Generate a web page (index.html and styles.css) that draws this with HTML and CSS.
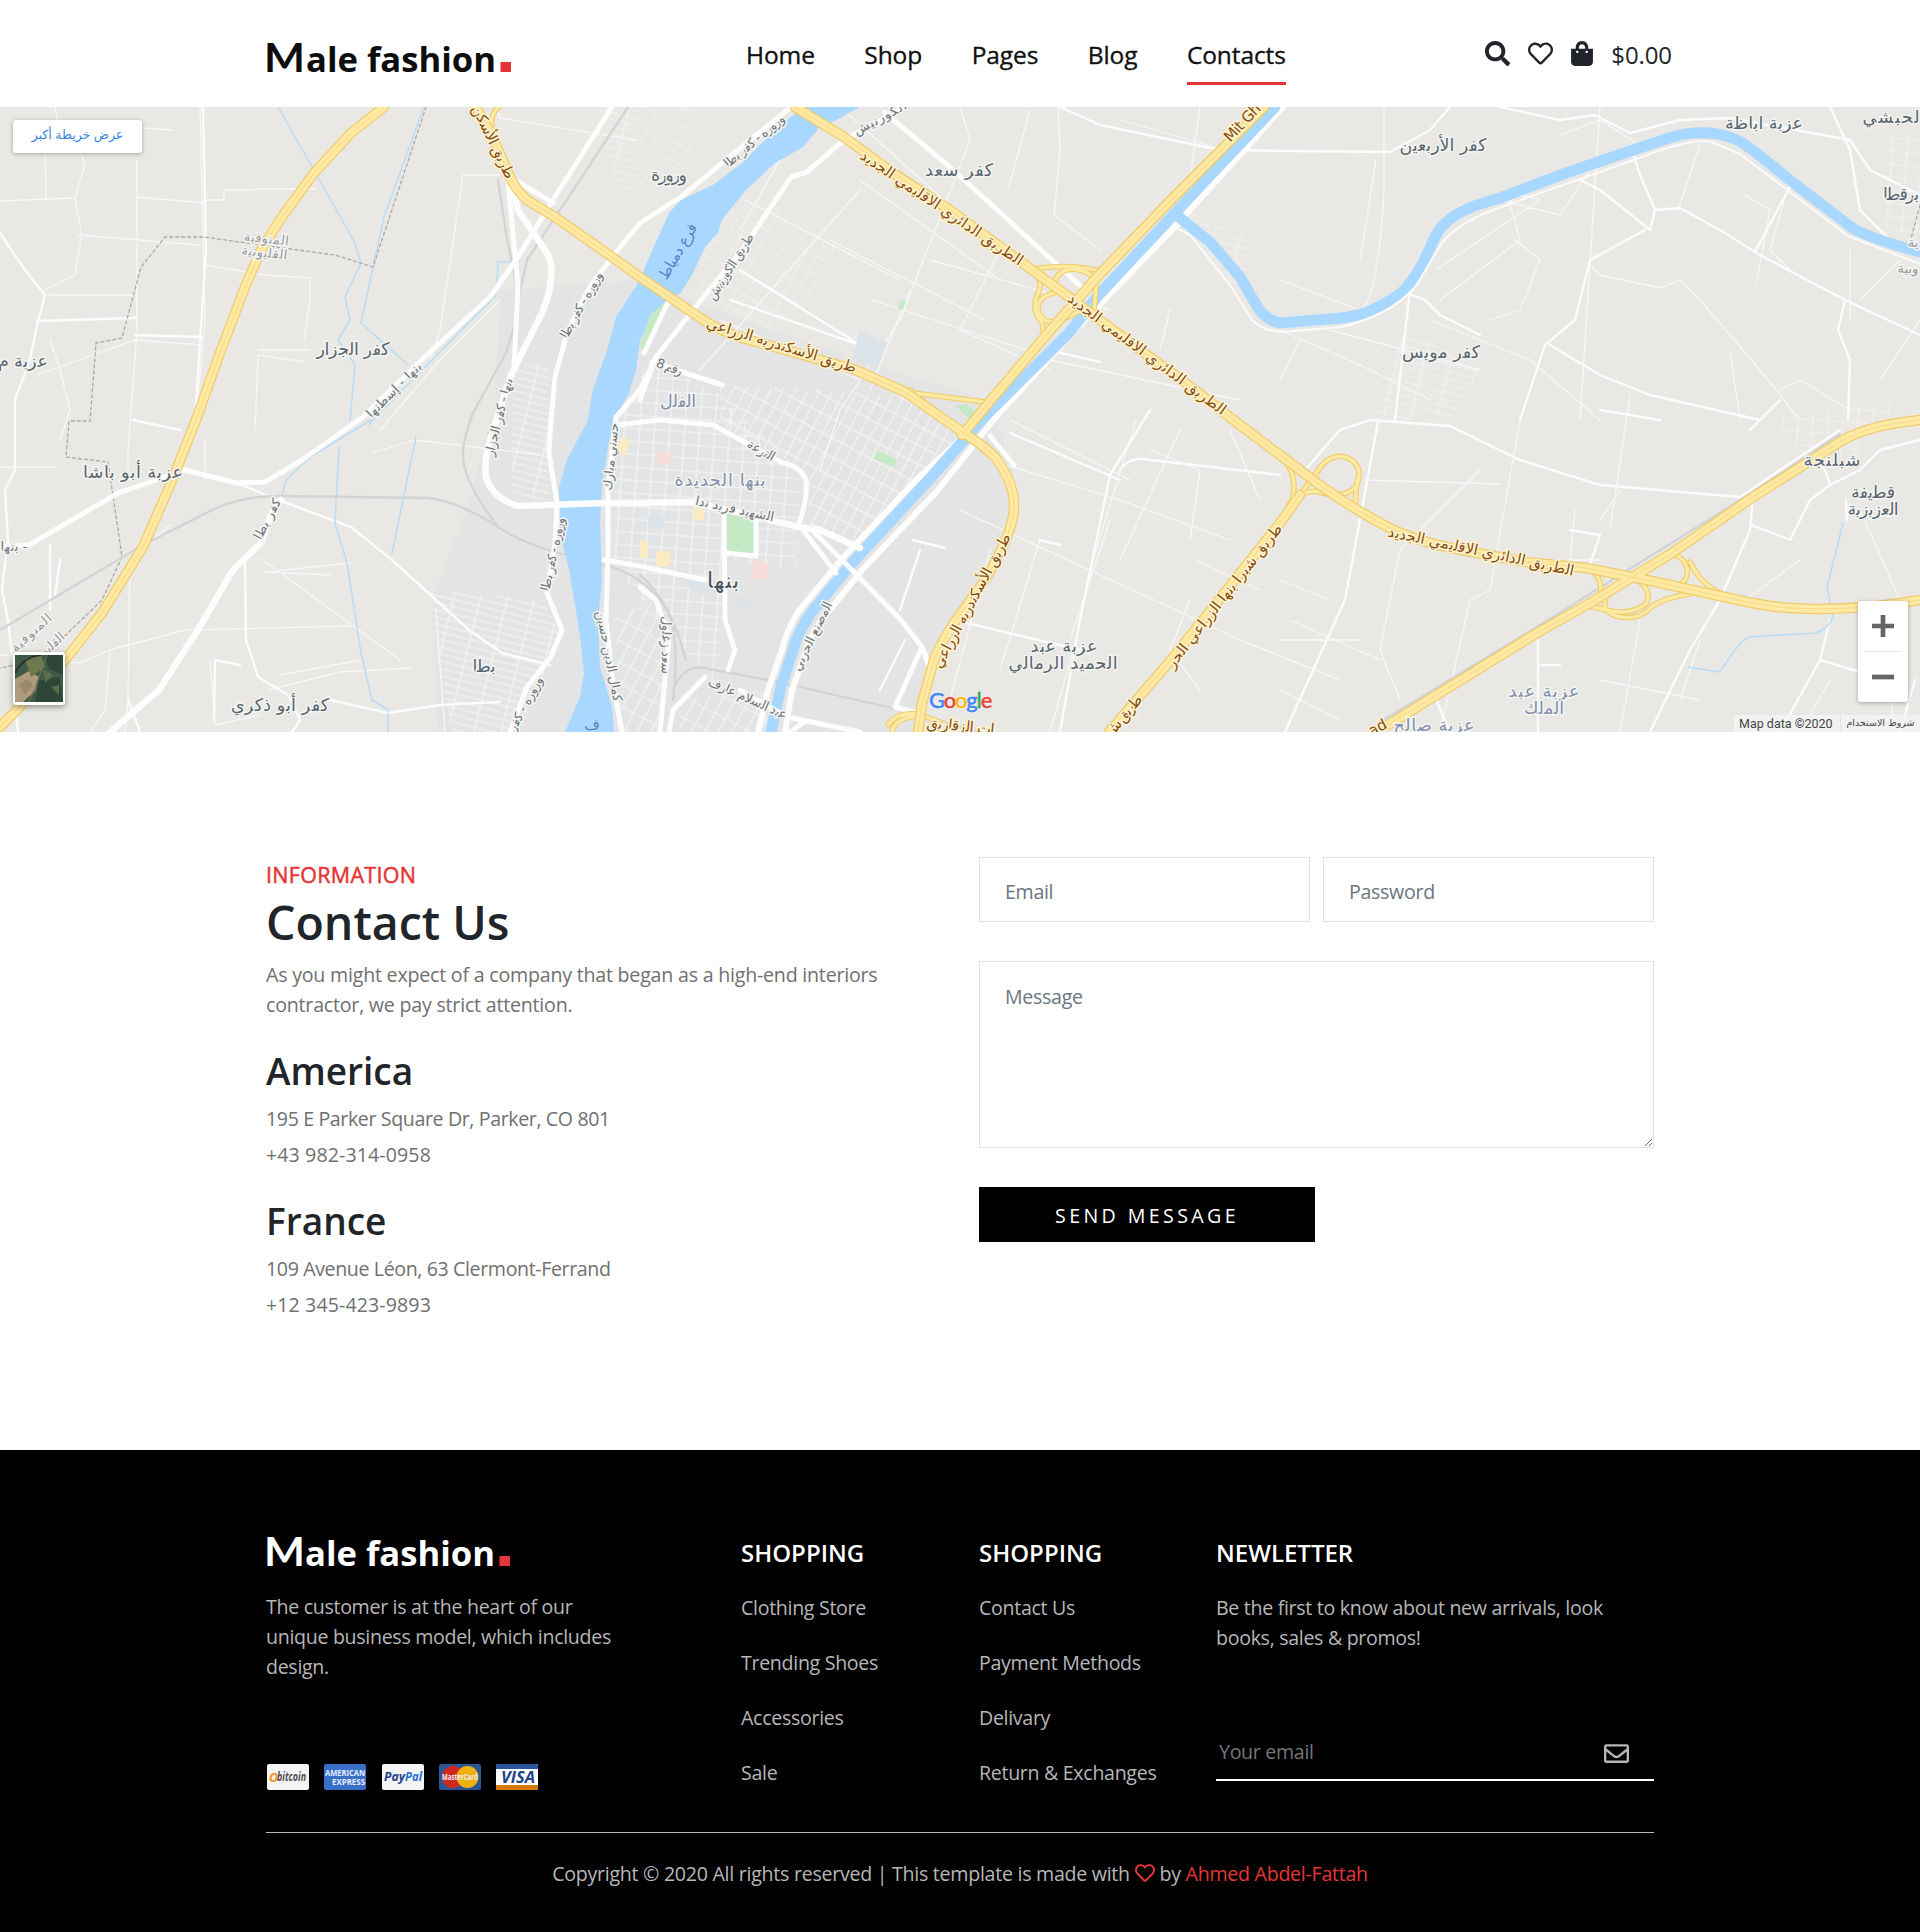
FILE: index.html
```html
<!DOCTYPE html>
<html lang="en">
<head>
<meta charset="utf-8">
<title>Male fashion - Contacts</title>
<link rel="stylesheet" href="styles.css">
</head>
<body>
<header class="header">
  <div class="container header-row">
    <a class="brand" href="#">
      <svg class="logo" width="247" height="40" viewBox="0 0 247 40">
        <text class="logo-m" x="-2" y="34" textLength="41" lengthAdjust="spacingAndGlyphs">M</text>
        <text class="logo-text" x="40" y="34" textLength="190" lengthAdjust="spacingAndGlyphs">ale fashion</text>
        <rect class="logo-dot" x="234.500" y="24" width="10.500" height="10"/>
      </svg>
    </a>
    <nav class="nav">
      <a href="#">Home</a>
      <a href="#">Shop</a>
      <a href="#">Pages</a>
      <a href="#">Blog</a>
      <a class="active" href="#">Contacts</a>
    </nav>
    <div class="tools">
      <svg width="25" height="25" viewBox="0 0 512 512"><path d="M505 442.700L405.300 343c-4.500-4.500-10.600-7-17-7H372c27.600-35.300 44-79.700 44-128C416 93.100 322.900 0 208 0S0 93.100 0 208s93.100 208 208 208c48.300 0 92.700-16.400 128-44v16.300c0 6.400 2.500 12.500 7 17l99.700 99.700c9.400 9.400 24.600 9.400 33.900 0l28.300-28.300c9.400-9.400 9.400-24.600.1-34zM208 336c-70.700 0-128-57.200-128-128 0-70.700 57.200-128 128-128 70.700 0 128 57.200 128 128 0 70.700-57.200 128-128 128z"/></svg>
      <svg width="25" height="25" viewBox="0 0 512 512"><path d="M458.400 64.300C400.600 15.700 311.300 23 256 79.300 200.700 23 111.400 15.600 53.600 64.300-21.600 127.600-10.600 230.800 43 285.500l175.400 178.700c10 10.200 23.400 15.900 37.600 15.900 14.300 0 27.600-5.600 37.600-15.800L469 285.600c53.500-54.700 64.700-157.900-10.600-221.300zm-23.600 187.500L259.400 430.500c-2.400 2.400-4.400 2.400-6.800 0L77.200 251.800c-36.500-37.200-43.900-107.600 7.300-150.700 38.900-32.700 98.900-27.800 136.500 10.500l35 35.700 35-35.700c37.800-38.500 97.800-43.200 136.500-10.600 51.100 43.100 43.500 113.900 7.300 150.800z"/></svg>
      <svg width="22" height="25" viewBox="0 0 448 512"><path d="M352 160v-32C352 57.420 294.579 0 224 0 153.420 0 96 57.420 96 128v32H0v272c0 44.183 35.817 80 80 80h288c44.183 0 80-35.817 80-80V160h-96zm-192-32c0-35.290 28.710-64 64-64s64 28.710 64 64v32H160v-32zm160 120c-13.255 0-24-10.745-24-24s10.745-24 24-24 24 10.745 24 24-10.745 24-24 24zm-192 0c-13.255 0-24-10.745-24-24s10.745-24 24-24 24 10.745 24 24-10.745 24-24 24z"/></svg>
      <span class="total">$0.00</span>
    </div>
  </div>
</header>

<section class="map">
  <svg class="map-canvas" width="1920" height="625" viewBox="0 107 1920 625">
    <defs>
      <pattern id="grid-a" width="17" height="11" patternUnits="userSpaceOnUse" patternTransform="rotate(-62)"><path class="street" d="M0 5.500H17M4 0V11"/></pattern>
      <pattern id="grid-b" width="15" height="13" patternUnits="userSpaceOnUse" patternTransform="rotate(4)"><path class="street" d="M0 6H15M8 0V13"/></pattern>
      <pattern id="grid-c" width="26" height="7" patternUnits="userSpaceOnUse" patternTransform="rotate(14)"><path class="street" d="M0 3H26M13 0V7"/></pattern>
      <pattern id="grid-d" width="12" height="19" patternUnits="userSpaceOnUse" patternTransform="rotate(28)"><path class="street" d="M0 9H12M6 0V19"/></pattern>
      <g id="highways">
        <path d="M384 107L351 133L314 173L282 217L261 250L245 287L220 353L196 420L171 483L143 547L102 613L65 660L0 727"/>
        <path d="M476 107L494 140L510 177Q516 190 527 200L555 217L612 257L640 277L693 313Q716 330 742 338L803 355L856 370L905 392L942 418L967 435Q984 446 995 457Q1015 484 1014 507Q1014 530 987 577L954 623Q938 648 934 660L922 703L918 732"/>
        <path d="M795 107L844 137L893 173L950 210L1028 267L1069 297L1113 330L1191 387L1232 419L1280 455L1317 483Q1360 514 1398 532Q1430 544 1451 548L1525 562L1586 568L1647 580L1729 598Q1762 606 1790 608Q1850 612 1920 600"/>
        <path d="M1264 107L1171 200L1097 277L1048 333L991 400L962 435"/>
        <path d="M1388 725L1537 633L1590 603L1672 553L1753 497L1843 440Q1870 425 1920 420"/>
        <path d="M1109 732L1171 660L1280 523L1300 495"/>
      </g>
      <g id="ramps">
        <path d="M499 107Q490 114 492 126"/>
        <path d="M1028 270Q1068 262 1104 272M1054 288Q1054 271 1072 269Q1094 270 1096 287L1094 312M1036 272Q1044 284 1036 298Q1032 312 1042 322L1044 338M1058 292Q1036 296 1038 310Q1044 330 1070 316L1086 308"/>
        <path d="M905 392L985 402L991 398M910 390L952 426"/>
        <path d="M1300 495L1322 465Q1332 454 1346 457Q1364 464 1357 485Q1346 500 1320 492Q1306 488 1288 504M1286 462Q1298 480 1292 500M1357 480L1355 506L1370 516"/>
        <path d="M1594 573Q1603 580 1600 596M1606 598Q1600 612 1620 617Q1640 620 1650 608Q1662 598 1690 594M1640 582Q1652 592 1646 604Q1630 616 1606 610L1590 606M1672 553Q1692 562 1686 578Q1682 586 1672 586M1690 562Q1704 590 1729 596"/>
        <path d="M888 725Q896 712 918 714L940 722M892 732Q894 718 918 716"/>
      </g>
      <g id="canal"><path d="M1275 107L1187 200L1097 297L1069 333L983 418L926 483L852 563L811 613Q798 632 793 650L781 687L771 732"/></g>
    </defs>
    <rect class="land" y="107" width="1920" height="625"/>
    <path class="urban" d="M500 290L640 280L742 320L905 375L990 400L1012 470L1010 530L936 650L914 732H438L432 600L470 500L495 400Z"/>
    <path class="field-tint" d="M562 732L580 640L560 500L600 400L640 360L664 420L650 732Z"/>

    <!-- dense blocks of town streets -->
    <path fill="url(#grid-a)" d="M720 385L900 395L965 430L860 545L810 525L806 470L720 425Z"/>
    <path fill="url(#grid-b)" d="M616 425L650 360L720 395L800 470L795 570L725 560L720 690L640 600L612 560Z"/>
    <path fill="url(#grid-c)" d="M430 590L545 600L560 635L520 732H452L436 650ZM512 365H548L550 500L512 496Z"/>
    <path fill="url(#grid-d)" d="M614 620L650 600L664 640L660 732H624ZM676 700L770 690L765 732H680Z"/>
    <path fill="url(#grid-a)" opacity=".5" d="M700 230L760 190L850 260L770 330L700 300ZM640 107H700L690 170L640 200Z"/>
    <path fill="url(#grid-c)" opacity=".7" d="M1405 330L1440 345L1415 420H1372ZM1440 350L1480 370L1450 420L1424 410ZM1188 210L1250 240L1240 300L1205 260ZM600 110L640 110L636 190L615 190Z"/>
    <path fill="url(#grid-b)" opacity=".7" d="M1886 130L1920 135V250L1885 225ZM1770 420L1900 400L1850 460L1800 450Z"/>

    <!-- minor roads -->
    <g class="lane">
      <path d="M137 220H136M55 107L58 122L172 130M45 140L46 200M200 107L205 320L196 420M137 160V330L128 450V470M0 201L75 198L85 165L76 140M75 198L82 235L75 275L45 290M78 235L200 245M205 200H224V190H253L256 189H315M135 197L205 203M205 265L265 275L310 278V300L304 340M37 375L135 340M50 340L60 370L70 410L60 440M135 340L203 345M0 467H55M205 480V440M258 350H310M305 362L258 355L255 430M48 295H135M463 175L500 175M463 175L440 330L430 360M500 300L440 360L380 430M372 453L415 440L540 455M0 655L80 663L110 650L185 630L350 626M110 650L105 710L90 732M170 525L130 560L128 700L125 732M210 660L215 725L260 715M350 563L265 572L330 575M268 690L340 672L410 668M260 558L400 660M361 660L280 675M495 107L500 118L636 140M436 610L445 732"/>
      <path d="M840 107L1000 250M780 160L740 230M745 200L900 280M960 107L970 140L900 320L840 410L820 470M910 290L870 390M860 190L700 370M1000 250L960 330L1050 370M830 240L985 320M860 180L1000 280M720 320L860 380M1058 107L1060 150L1054 215L1100 250M930 260L1110 310M872 300L1026 350M1050 360L1240 400M1030 110L1008 190M1120 120L1225 150M1200 107L1190 180M990 460L1120 500L1230 540M1136 420L1090 570L1076 640L1050 732M960 510L1240 640M990 550L950 700M1040 540L1000 670M1110 520L1070 640M1180 430L1120 560M1190 600L1170 650L1200 690M1240 640L1340 680M1160 350L1170 310M1150 450L1200 470L1190 540M1230 430L1260 500M1010 420L1130 480M1195 560L1260 590M1290 620L1380 660"/>
      <path d="M1280 280L1360 310Q1378 300 1384 190V107M1436 270L1540 200Q1512 190 1510 205L1520 240L1440 300M1280 330L1360 365L1430 400M1376 160L1360 260M1280 380L1300 340M1330 330L1480 370M1515 240L1540 260L1520 310L1490 320M1590 265L1600 275L1660 288L1680 280L1700 300L1760 370L1800 420M1700 145L1678 210M1745 195L1770 210L1756 285M1790 180L1770 250L1790 270M1640 145L1600 120L1560 135M1500 200L1560 215L1590 170M1860 300L1900 260M1850 410L1800 380L1780 390M1920 320L1880 380M1630 395L1610 530M1730 350L1740 420M1430 320L1530 360L1600 420M1365 480L1500 484M1520 420L1490 590L1470 600L1440 732M1480 470L1400 550L1380 650L1400 700M1600 107L1580 420M1280 580L1330 600M1280 640L1360 640M1575 510L1570 560L1600 560M1620 490L1600 520M1640 620L1620 732M1700 640L1680 700M1745 600L1800 560M1280 690L1340 720M1600 680L1700 700M1860 510L1900 600L1890 732M1830 680L1800 732M1850 250V320"/>
    </g>
    <g class="road-sm">
      <path d="M0 233L25 270L45 295L37 325L30 360L15 400V470L5 490L8 540L2 590L8 620L12 655L18 732"/>
      <path d="M37 321L135 318M135 335L202 337M203 107L206 250L195 420M133 420L180 430M50 545V610M55 595L60 560M237 483L278 500L351 527L392 560L469 630L502 653L550 665M245 560L246 640L258 677L288 695L300 720L292 732M214 720L215 660L240 665M388 713L440 705L500 702M330 700L388 713M140 732L128 700"/>
      <path d="M1060 107L1100 125L1220 150L1290 151L1390 152L1430 130L1450 107M1500 107L1560 120L1595 115L1630 133L1680 120L1730 118L1850 140L1870 170L1920 195M1580 180L1600 190L1650 230L1655 210L1640 175L1632 150M1655 210L1680 208L1720 230L1760 255L1845 300L1920 335M1645 230L1590 260L1575 320L1545 345L1520 420M1845 300L1838 330L1850 360L1848 420M1550 345L1600 375L1650 395L1760 420M1790 187L1755 252M1407 293L1425 300L1440 315L1480 335M1410 290L1395 420M1830 107L1850 150L1860 210L1890 240M1780 400L1750 430M1600 410L1660 420M1305 470L1340 430L1370 420L1450 426L1520 460L1600 485L1740 497L1780 470L1840 430M1378 422L1345 600L1285 732M1753 497L1750 530L1720 600L1690 650L1650 732M1752 525L1790 540L1810 500L1830 485L1860 470L1880 450L1920 440M1830 485L1825 470L1810 450M1847 520L1846 500M1830 620L1820 660L1780 732M1820 660L1870 675M1900 732L1915 680M1538 640V732M1437 702L1450 732M1540 665L1560 665M1570 530L1600 535L1590 565"/>
      <path d="M1048 350L1100 362M1150 410L1110 475L1080 620L1060 732M1120 470Q1130 455 1150 460L1280 475M1010 433L1120 480M954 620L1080 650M1040 540L1060 545M913 540L945 548M920 550L900 610M880 690L905 640M740 270L860 345L730 300"/>
    </g>
    <g class="water-sm">
      <path d="M278 107L310 163L355 243L361 263L345 297L350 320L338 340L355 365L350 420M424 107L384 217L361 323L408 365M416 437L392 553M371 420L310 457L286 480L281 500M339 447L335 523L347 563L361 653L372 700L388 710V732M518 262L498 262L496 295L432 360L368 425"/>
      <path d="M1843 523L1827 587L1833 617Q1828 630 1815 633L1749 637Q1740 642 1733 653L1719 672L1688 667"/>
    </g>
    <path class="boundary" d="M426 107L373 267L335 255L261 245L204 237L165 237L141 267L122 338L96 343L90 421H69L66 457L108 462L122 557L102 600L40 660L0 668M1920 205L1908 250"/>
    <g class="rail">
      <path d="M498 180L506 233L518 293Q518 320 506 353L473 413Q463 440 463 453Q462 480 498 527Q520 542 555 552L612 567Q650 580 668 612Q680 640 673 700M628 107L527 260L518 300M0 630L143 545L216 508Q244 496 278 496L429 498Q460 502 498 527M673 690Q684 664 705 668L783 683L922 715L980 732M640 575Q670 600 686 660M1380 722L1532 630L1750 494L1840 434"/>
    </g>

    <!-- river and canals -->
    <path class="water" d="M803 107L775 130L742 163L713 185L681 200L669 213L660 233L648 260L640 280L616 317L608 347L592 393L588 420L567 460L559 487L561 537L569 570L576 610L580 637L584 673L580 697L565 732H614L612 707L600 667L598 620L602 580L600 520L602 487L608 447L614 420L628 395L636 370L640 340L664 303L681 293L693 273L705 247L718 233L722 220L746 190L775 163L803 147L820 127L836 120L860 107Z"/>
    <path class="canal-road" d="M1283 107L1171 231L1083 322L995 418L938 490L862 570L820 622Q808 640 804 656L792 690L785 732M962 438L916 480L841 560L798 612Q786 632 782 650L768 690L758 732"/>
    <use class="canal" href="#canal"/>
    <path class="canal" d="M1179 217L1211 243L1240 277L1258 308Q1266 320 1280 323L1341 318Q1362 316 1378 307Q1400 296 1407 287Q1416 276 1423 263L1435 237Q1442 223 1456 215Q1470 206 1500 198L1566 173L1639 148L1672 137Q1690 132 1709 133Q1726 134 1741 142Q1756 152 1786 177L1851 227Q1868 238 1920 252"/>
    <path class="road-thin" d="M1172 226L1190 235L1230 285L1252 320Q1264 332 1284 332L1341 327Q1390 316 1416 286L1440 246Q1456 222 1504 206L1642 157Q1690 138 1712 142L1740 154L1848 236L1920 264"/>
    <path class="park" d="M726 513L756 517V555L726 552ZM664 303L650 315L640 345L644 353L668 303ZM878 451L897 460L894 467L874 459ZM956 406L966 404L979 414L970 419ZM900 301L906 300L903 310L898 309Z"/>
    <path class="clinic" d="M754 558L769 565L767 580L750 578ZM658 451L671 455L669 466L656 463Z"/>
    <path class="campus" d="M676 570L720 582L714 598L688 588ZM730 598H755V606H730ZM860 330L886 342L878 368L852 360ZM648 515H664V528H648Z"/>
    <path class="shops" d="M640 541H648V558H640ZM656 551H670V566H656ZM622 437L630 440L626 456L616 452ZM694 508H704V520H694Z"/>

    <!-- main roads -->
    <g class="road">
      <path d="M791 107L722 163L681 197L640 223L612 257L588 290L567 333L555 377L551 420L549 453L557 503L555 543L547 593L562 630L551 657L527 687L510 732"/>
      <path d="M612 107L551 203L518 257L490 297L429 353L363 417L302 460L265 482L237 483L184 470M29 545L118 493L171 475L184 470M0 547L29 545"/>
      <path class="wide" d="M281 500L273 510L261 543L233 570L196 633L159 690L110 732"/>
      <path class="wide" d="M510 180L518 210L543 247Q554 262 551 277Q550 300 535 327L510 377L490 440Q484 460 486 477Q492 498 518 506L604 503H640L693 502L799 527L820 530L860 548"/>
      <path d="M508 180L518 287L514 367M510 177L553 203M656 357L640 390L616 417L608 487V553L606 620L612 677L622 732"/>
      <path d="M905 107L844 140L807 172L791 177L742 250L693 310L656 357L640 400M669 300L644 353"/>
      <path d="M885 113L950 167L1085 290M652 362L722 385M616 425L660 420L713 425L783 463Q800 466 806 480Q808 500 799 523M803 530L836 573M810 528L852 570L901 620L922 647Q930 664 930 680M922 647L895 707L918 713M990 436L1014 465"/>
      <path d="M604 560L640 566L705 580M724 512L725 620L735 650L728 670M669 732L673 710L705 677M660 732L669 637L656 600L640 587M740 690L787 717L860 732M790 732L804 722M726 553L756 556V516"/>
    </g>
    <use class="hwy-case" href="#ramps"/><use class="ramp" href="#ramps"/>
    <use class="hwy-case wide" href="#highways"/><use class="hwy" href="#highways"/><use class="hwy-mid" href="#highways"/>

    <!-- place names -->
    <g class="label place">
      <text x="353" y="355" textLength="73">كفر الجزار</text>
      <text x="23" y="367" textLength="50">عزبة م</text>
      <text x="133" y="478" textLength="100">عزبة أبو باشا</text>
      <text x="280" y="711" textLength="98">كفر أبو ذكري</text>
      <text x="484" y="672" textLength="23">بطا</text>
      <text x="669" y="181" textLength="36">ورورة</text>
      <text x="959" y="176" textLength="68">كفر سعد</text>
      <text x="1443" y="151" textLength="87">كفر الأربعين</text>
      <text x="1441" y="358" textLength="78">كفر مويس</text>
      <text x="1764" y="129" textLength="78">عزبة اباظة</text>
      <text x="1891" y="123" textLength="57">لحبشي</text>
      <text x="1901" y="200" textLength="36">برقطا</text>
      <text x="1832" y="466" textLength="57">شبلنجة</text>
      <text x="1873" y="498" textLength="44">قطيفة</text>
      <text x="1873" y="515" textLength="51">العزيزية</text>
      <text x="1064" y="652" textLength="67">عزبة عبد</text>
      <text x="1063" y="669" textLength="109">الحميد الرمالي</text>
      <text class="city" x="723" y="588" textLength="32">بنها</text>
    </g>
    <g class="label hamlet">
      <text x="678" y="407" textLength="36">الفلل</text>
      <text x="720" y="486" textLength="91">بنها الجديدة</text>
      <text x="1544" y="697" textLength="71">عزبة عبد</text>
      <text x="1544" y="714" textLength="40">الملك</text>
      <text x="1434" y="731" textLength="81">عزبة صالح</text>
    </g>
    <g class="label region">
      <text transform="translate(266 243) rotate(6)" textLength="45">المنوفية</text>
      <text transform="translate(264 257) rotate(6)" textLength="46">القليوبية</text>
      <text transform="translate(34 636) rotate(-42)" textLength="50">المنوفية</text>
      <text transform="translate(50 652) rotate(-42)" textLength="42">القليوبية</text>
      <text x="1908" y="273">وبية</text>
      <text x="1913" y="247">ية</text>
    </g>
    <g class="label street-name">
      <text x="14" y="551" textLength="27">بنها -</text>
      <text transform="translate(271 521) rotate(-62)" textLength="44">كفر بطا</text>
      <text transform="translate(397 393) rotate(-45)" textLength="72">بنها - إسطنها</text>
      <text transform="translate(585 307) rotate(-61)" textLength="74">وروره - كفر بطا</text>
      <text transform="translate(503 418) rotate(-76)" textLength="80">بنها - كفر الجزار</text>
      <text transform="translate(757 144) rotate(-40)" textLength="75">وروره - كفر بطا</text>
      <text transform="translate(734 269) rotate(-58)" textLength="76">طريق الكورنيش</text>
      <text transform="translate(882 122) rotate(-28)" textLength="58">الكورنيش</text>
      <text transform="translate(668 371) rotate(20)" textLength="27">رقم 8</text>
      <text transform="translate(734 513) rotate(12)" textLength="80">الشهيد فريد ندا</text>
      <text transform="translate(759 454) rotate(29)" textLength="30">الترعة</text>
      <text transform="translate(615 457) rotate(-84)" textLength="68">حسني مبارك</text>
      <text transform="translate(557 555) rotate(-78)" textLength="75">وروره - كفر بطا</text>
      <text transform="translate(605 657) rotate(79)" textLength="92">كمال الدين حسين</text>
      <text transform="translate(662 645) rotate(91)" textLength="58">سعد زغلول</text>
      <text transform="translate(816 638) rotate(-64)" textLength="75">المصنع الحربي</text>
      <text transform="translate(746 702) rotate(24)" textLength="85">عبد السلام عارف</text>
      <text transform="translate(529 706) rotate(-62)" textLength="60">وروره - كفر</text>
    </g>
    <g class="label river-name">
      <text transform="translate(682 254) rotate(-60)" textLength="62">فرع دمياط</text>
      <text x="592" y="730">ف</text>
    </g>
    <g class="label highway-name">
      <text transform="translate(489 144) rotate(64)" textLength="80">طريق الأسكن</text>
      <text transform="translate(939 212) rotate(34)" textLength="193">الطريق الدائري الاقليمي الجديد</text>
      <text transform="translate(1144 358) rotate(36.500)" textLength="193">الطريق الدائري الاقليمي الجديد</text>
      <text transform="translate(1480 556) rotate(12)" textLength="190">الطريق الدائري الاقليمي الجديد</text>
      <text transform="translate(780 350) rotate(17)" textLength="156">طريق الأسكندريه الزراعي</text>
      <text transform="translate(976 603) rotate(-62)" textLength="150">طريق الأسكندريه الزراعي</text>
      <text transform="translate(1228 599) rotate(-52)" textLength="178">طريق شبرا بنها الزراعي الحر</text>
      <text transform="translate(1127 719) rotate(-50)" textLength="50">طريق ش</text>
      <text transform="translate(960 731) rotate(6)" textLength="68">ات الزقازيق</text>
      <text transform="translate(1246 126) rotate(-47)" textLength="46">Mit Gh</text>
      <text transform="translate(1380 732) rotate(-28)">ad</text>
    </g>
  </svg>
  <a class="larger-map" href="#" lang="ar">عرض خريطة أكبر</a>
  <div class="satellite">
    <svg width="48" height="47" viewBox="0 0 48 47">
      <rect width="48" height="47" fill="#3f5a45"/>
      <path fill="#b09a7c" d="M0 24L14 16L24 22L20 36L8 47H0Z"/>
      <path fill="#6e7a4e" d="M10 4L26 0L30 12L16 22Z"/>
      <path fill="#2c4637" d="M30 0H48V20L34 14ZM24 26L44 22L48 47H20Z"/>
      <path fill="#55714f" d="M28 14L38 20L30 28ZM36 32L44 30V40Z"/>
      <path fill="#9a8a68" d="M4 30L12 24L18 30L10 40Z"/>
      <path fill="none" stroke="#26332d" stroke-width="2" d="M0 18Q8 2 26 0"/>
      <path fill="none" stroke="#7c7460" d="M14 47L24 22L32 0"/>
    </svg>
  </div>
  <div class="google"><span class="g-blue">G</span><span class="g-red">o</span><span class="g-yellow">o</span><span class="g-blue">g</span><span class="g-green">l</span><span class="g-red">e</span></div>
  <div class="zoom">
    <button class="zoom-btn" aria-label="Zoom in"><svg width="22" height="22" viewBox="0 0 22 22"><path d="M0 11H22M11 0V22"/></svg></button>
    <button class="zoom-btn" aria-label="Zoom out"><svg width="22" height="22" viewBox="0 0 22 22"><path d="M0 11H22"/></svg></button>
  </div>
  <div class="credits"><span class="credit-data">Map data ©2020</span><span class="credit-terms" lang="ar">شروط الاستخدام</span></div>
</section>

<main class="container contact">
  <section class="info">
    <h6 class="eyebrow">INFORMATION</h6>
    <h1 class="title">Contact Us</h1>
    <p class="lead">As you might expect of a company that began as a high-end interiors<br>contractor, we pay strict attention.</p>
    <h2 class="place-title">America</h2>
    <p class="detail">195 E Parker Square Dr, Parker, CO 801</p>
    <p class="detail phone">+43 982-314-0958</p>
    <h2 class="place-title">France</h2>
    <p class="detail">109 Avenue Léon, 63 Clermont-Ferrand</p>
    <p class="detail phone">+12 345-423-9893</p>
  </section>
  <form class="form">
    <div class="form-row">
      <input class="field" type="email" placeholder="Email">
      <input class="field" type="password" placeholder="Password">
    </div>
    <textarea class="field message" placeholder="Message"></textarea>
    <button class="send" type="button">SEND MESSAGE</button>
  </form>
</main>

<footer class="footer">
  <div class="container">
    <div class="footer-grid">
      <div class="about">
        <svg class="logo light" width="247" height="40" viewBox="0 0 247 40">
          <text class="logo-m" x="-2" y="34" textLength="41" lengthAdjust="spacingAndGlyphs">M</text>
          <text class="logo-text" x="39" y="34" textLength="190" lengthAdjust="spacingAndGlyphs">ale fashion</text>
          <rect class="logo-dot" x="233.500" y="24" width="10.500" height="10"/>
        </svg>
        <p class="about-text">The customer is at the heart of our<br>unique business model, which includes<br>design.</p>
        <div class="cards">
          <svg width="42" height="26" viewBox="0 0 42 26"><rect width="42" height="26" rx="2" fill="#f4f4f4"/><text class="card-text" x="2" y="17.500" textLength="9" lengthAdjust="spacingAndGlyphs" fill="#f7931a">O</text><text class="card-text" x="10" y="17" textLength="29" lengthAdjust="spacingAndGlyphs" fill="#4d4d4d">bitcoin</text></svg>
          <svg width="42" height="26" viewBox="0 0 42 26"><rect width="42" height="26" rx="2" fill="#3a6fc9"/><text class="card-small" x="1" y="12" textLength="40" lengthAdjust="spacingAndGlyphs">AMERICAN</text><text class="card-small" x="8" y="21" textLength="33" lengthAdjust="spacingAndGlyphs">EXPRESS</text></svg>
          <svg width="42" height="26" viewBox="0 0 42 26"><rect width="42" height="26" rx="2" fill="#f4f4f4"/><text class="card-text" x="2" y="17" textLength="21" lengthAdjust="spacingAndGlyphs" fill="#1d3f8f">Pay</text><text class="card-text" x="23" y="17" textLength="17" lengthAdjust="spacingAndGlyphs" fill="#2a6fd6">Pal</text></svg>
          <svg width="42" height="26" viewBox="0 0 42 26"><rect width="42" height="26" rx="2" fill="#2b5597"/><circle cx="14" cy="13" r="11" fill="#d0281c"/><circle cx="28.500" cy="13" r="11" fill="#eeb111"/><text class="card-small" x="3" y="16" textLength="36" lengthAdjust="spacingAndGlyphs">MasterCard</text></svg>
          <svg width="42" height="26" viewBox="0 0 42 26"><rect width="42" height="26" rx="2" fill="#fff"/><path fill="#285499" d="M0 2Q0 0 2 0H40Q42 0 42 2V5H0Z"/><path fill="#d97b0c" d="M0 21H42V24Q42 26 40 26H2Q0 26 0 24Z"/><text class="card-text visa" x="5" y="18.500" textLength="34" lengthAdjust="spacingAndGlyphs" fill="#1d4488">VISA</text></svg>
        </div>
      </div>
      <div class="links">
        <h5 class="footer-title">SHOPPING</h5>
        <a href="#">Clothing Store</a><a href="#">Trending Shoes</a><a href="#">Accessories</a><a href="#">Sale</a>
      </div>
      <div class="links">
        <h5 class="footer-title">SHOPPING</h5>
        <a href="#">Contact Us</a><a href="#">Payment Methods</a><a href="#">Delivary</a><a href="#">Return &amp; Exchanges</a>
      </div>
      <div class="newsletter">
        <h5 class="footer-title">NEWLETTER</h5>
        <p class="news-text">Be the first to know about new arrivals, look<br>books, sales &amp; promos!</p>
        <div class="subscribe">
          <input class="subscribe-input" type="email" placeholder="Your email">
          <svg width="25" height="25" viewBox="0 0 512 512"><path d="M464 64H48C21.490 64 0 85.490 0 112v288c0 26.510 21.490 48 48 48h416c26.510 0 48-21.490 48-48V112c0-26.510-21.490-48-48-48zm0 48v40.805c-22.422 18.259-58.168 46.651-134.587 106.490-16.841 13.247-50.201 45.072-73.413 44.701-23.208.375-56.579-31.459-73.413-44.701C106.180 199.465 70.425 171.067 48 152.805V112h416zM48 400V214.398c22.914 18.251 55.409 43.862 104.938 82.646 21.857 17.205 60.134 55.186 103.062 54.955 42.717.231 80.509-37.199 103.053-54.947 49.528-38.783 82.032-64.401 104.947-82.653V400H48z"/></svg>
        </div>
      </div>
    </div>
    <p class="copyright">Copyright © 2020 All rights reserved | This template is made with
      <svg class="heart" width="20" height="20" viewBox="0 0 512 512"><path d="M458.400 64.300C400.600 15.700 311.300 23 256 79.300 200.700 23 111.400 15.600 53.600 64.300-21.600 127.600-10.600 230.800 43 285.500l175.400 178.700c10 10.200 23.400 15.900 37.600 15.900 14.300 0 27.600-5.600 37.600-15.800L469 285.600c53.500-54.700 64.700-157.900-10.600-221.300zm-23.600 187.500L259.400 430.500c-2.400 2.400-4.400 2.400-6.800 0L77.200 251.800c-36.500-37.200-43.900-107.600 7.300-150.700 38.900-32.700 98.900-27.800 136.500 10.500l35 35.700 35-35.700c37.800-38.500 97.800-43.200 136.500-10.600 51.100 43.100 43.500 113.900 7.300 150.800z"/></svg>
      by <a href="#">Ahmed Abdel-Fattah</a></p>
  </div>
</footer>
</body>
</html>
```
FILE: styles.css
```css
* { box-sizing: border-box; }

body {
  margin: 0;
  background: #fff;
  color: #212529;
  font: 400 19.600px/30px "Open Sans", "Noto Sans", sans-serif;
  letter-spacing: -.31px;
}

h1, h2, h5, h6, p { margin: 0; font-weight: 600; letter-spacing: 0; }
p { font-weight: 400; letter-spacing: -.31px; }
a { color: inherit; text-decoration: none; }

.container { width: 1388px; margin: 0 auto; }

/* Header */
.header { height: 107px; }
.header-row { display: grid; grid-template-columns: 480px 1fr auto; width: 1406px; margin-left: 266px; align-items: start; }
.brand { display: block; height: 40px; margin-top: 38px; }
.logo { display: block; overflow: visible; fill: #0d0d0d; letter-spacing: 0; }
.logo.light { fill: #fff; }
.logo-m { font: 700 40px Lato, sans-serif; }
.logo-text { font: 700 34px "Open Sans", sans-serif; }
.logo-dot { fill: #e53637; }
.nav { display: flex; gap: 49.500px; margin-top: 36px; font-size: 24.500px; letter-spacing: -.1px; line-height: 38px; color: #111; -webkit-text-stroke: .35px #111; }
.nav a { height: 49px; }
.nav .active { border-bottom: 3px solid #e53637; }
.tools { display: flex; align-items: center; gap: 18px; margin-top: 36px; height: 38px; font-size: 24px; letter-spacing: -.1px; fill: #212529; }
.tools svg { margin-bottom: 3px; }

/* Map */
.map { position: relative; height: 625px; overflow: hidden; letter-spacing: 0; }
.map-canvas { display: block; }
.map-canvas path, .map-canvas use { stroke-linejoin: round; stroke-linecap: round; }
.land { fill: #e9e8e5; }
.urban { fill: #e4e4e4; }
.field-tint { fill: #e3e4e5; }
.street { fill: none; stroke: #f5f5f5; stroke-width: 1.200; }
.lane, .road-sm, .water-sm, .rail, .road { fill: none; }
.lane { stroke: #f6f7f8; stroke-width: 1.300; }
.road-sm { stroke: #fbfcfd; stroke-width: 2.400; }
.road-thin { fill: none; stroke: #fbfbfb; stroke-width: 2; }
.road { stroke: #fdfdfd; stroke-width: 5; }
.road .wide { stroke-width: 6.500; }
.water { fill: #a8d8ff; }
.water-sm { stroke: #b9dcf6; stroke-width: 1.500; }
.canal { fill: none; stroke: #a8d8ff; stroke-width: 11; }
.canal-road { fill: none; stroke: #fdfdfd; stroke-width: 6; }
.boundary { fill: none; stroke: #aaa9a6; stroke-width: 1.300; stroke-dasharray: 3 3; }
.rail { stroke: #d1d3d5; stroke-width: 2.300; }
.park { fill: #c5e8c5; }
.clinic { fill: #f8dcdc; }
.campus { fill: #dce3e9; }
.shops { fill: #faecc0; }
.hwy-case { fill: none; stroke: #f1cb68; stroke-width: 5.500; }
.hwy-case.wide { stroke-width: 10.500; }
.ramp { fill: none; stroke: #fce9a2; stroke-width: 3.400; }
.hwy { fill: none; stroke: #fde9a3; stroke-width: 8; }
.hwy-mid { fill: none; stroke: #f8da84; stroke-width: 1; }

.label text { text-anchor: middle; }
.label { font-family: "DejaVu Sans", sans-serif; paint-order: stroke; stroke: #f4f4f2; stroke-width: 3px; stroke-linejoin: round; }
.place { fill: #5a6470; font-size: 17.500px; }
.place .city { font-size: 22px; fill: #4a525c; }
.hamlet { fill: #8290ad; font-size: 17.500px; }
.region { fill: #97999c; font-size: 13px; }
.street-name { fill: #70757b; font-size: 13px; }
.river-name { fill: #5580c8; font-size: 15px; stroke: none; }
.highway-name { fill: #854d12; font-size: 15px; stroke: #fff3cf; }

.larger-map { position: absolute; left: 13px; top: 13px; width: 129px; height: 33px; border-radius: 3px; background: #fff; box-shadow: 0 1px 4px rgba(0, 0, 0, .3); color: #3a84df; font: 12.500px/31px "Liberation Sans", "DejaVu Sans", sans-serif; text-align: center; }
.satellite { position: absolute; left: 13px; top: 545px; width: 52px; height: 53px; padding: 3px 2px; border-radius: 3px; background: #fff; box-shadow: 0 2px 6px rgba(0, 0, 0, .4); }
.satellite svg { display: block; }
.google { position: absolute; left: 929px; top: 579px; font: 500 22px/28px Lato, sans-serif; letter-spacing: -1.200px; -webkit-text-stroke: .4px; text-shadow: 0 0 2px #fff; }
.g-blue { color: #4285f4; }
.g-red { color: #ea4335; }
.g-yellow { color: #fbbc05; }
.g-green { color: #34a853; }
.zoom { position: absolute; left: 1858px; top: 494px; width: 50px; height: 101px; padding: 0 6px; border-radius: 3px; background: #fff; box-shadow: 0 1px 4px rgba(0, 0, 0, .3); }
.zoom-btn { display: flex; align-items: center; justify-content: center; width: 38px; height: 50px; padding: 0; border: 0; background: none; }
.zoom-btn + .zoom-btn { border-top: 1px solid #e6e6e6; }
.zoom-btn svg { fill: none; stroke: #666; stroke-width: 4.700; }
.credits { position: absolute; right: 0; bottom: 0; display: flex; width: 186px; height: 17px; background: rgba(245, 245, 245, .75); color: #444; font: 12.500px/17px Roboto, sans-serif; white-space: nowrap; }
.credit-data { width: 107px; padding-left: 5px; border-right: 1px solid #e4e4e4; }
.credit-terms { flex: 1; font: 9.500px/16px "DejaVu Sans", sans-serif; text-align: center; }

/* Contact */
.contact { display: grid; grid-template-columns: 713px 675px; height: 718px; padding-top: 125px; }
.info { padding-top: 4px; }
.eyebrow { font-size: 21.500px; line-height: 27px; color: #e53637; font-weight: 500; -webkit-text-stroke: .5px #e53637; letter-spacing: .3px; }
.title { margin-top: 4px; font-size: 46.500px; line-height: 60px; }
.lead { margin-top: 8px; color: #707070; letter-spacing: -.21px; }
.place-title { margin-top: 27px; font-size: 37px; line-height: 48px; }
.detail { margin-top: 9px; color: #707070; letter-spacing: -.38px; }
.detail.phone { margin-top: 6px; letter-spacing: .1px; }
.form-row { display: grid; grid-template-columns: 331px 331px; gap: 13px; }
.field { display: block; height: 65px; padding: 3px 25px 0; border: 1px solid #e1e1e1; border-radius: 0; background: #fff; font: inherit; letter-spacing: -.31px; }
.field::placeholder { color: #6c757d; opacity: 1; }
.message { width: 675px; height: 187px; margin-top: 39px; padding-top: 20px; resize: vertical; }
.send { display: block; width: 336px; height: 55px; margin-top: 39px; padding: 2px 0 0; border: 0; background: #000; color: #fff; font: inherit; letter-spacing: 3.400px; }

/* Footer */
.footer { height: 482px; background: #000; color: #b7b7b7; }
.footer-grid { display: grid; grid-template-columns: 475px 238px 237px 438px; height: 383px; padding-top: 82px; border-bottom: 1px solid #b7b7b7; }
.about-text { margin-top: 20px; }
.about { display: flex; flex-direction: column; }
.cards { display: flex; gap: 15.250px; margin: 82px 0 0 1px; letter-spacing: 0; }
.card-text { font: italic 700 12px "Open Sans", sans-serif; }
.card-text.visa { font-size: 16px; }
.card-small { font: 700 8px "Open Sans", sans-serif; fill: #e8f0ff; }
.links { display: flex; flex-direction: column; gap: 25px; white-space: nowrap; }
.footer-title { height: 38px; margin-bottom: -2px; padding-top: 2px; color: #fff; font-size: 24px; font-weight: 600; line-height: 38px; }
.news-text { margin-top: 25px; }
.subscribe { display: flex; justify-content: space-between; align-items: center; height: 54px; margin-top: 74px; padding-right: 25px; border-bottom: 2px solid #fff; fill: #b7b7b7; }
.subscribe-input { width: 300px; padding: 0 3px 2px; border: 0; background: none; color: #fff; font: inherit; letter-spacing: -.31px; }
.subscribe-input::placeholder { color: #757575; }
.copyright { margin-top: 26px; text-align: center; letter-spacing: -.27px; }
.copyright a { color: #e53637; }
.heart { fill: #e53637; vertical-align: -2px; }
```
